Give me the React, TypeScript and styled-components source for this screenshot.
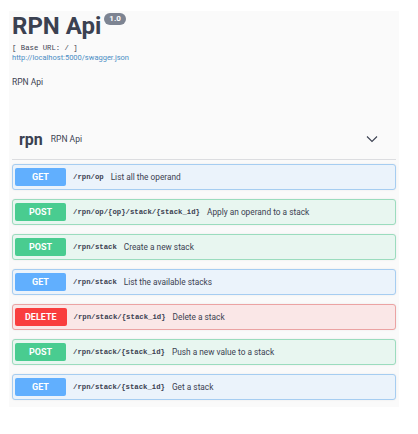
import React from "react";
import styled, { createGlobalStyle } from "styled-components";

const GlobalStyle = createGlobalStyle`
  html, body { margin: 0; padding: 0; background: #ffffff; }
  body { font-family: Roboto, "Liberation Sans", sans-serif; color: #3b4151; }
`;

type Method = "get" | "post" | "delete";

const palette: Record<Method, { main: string; bg: string; border: string }> = {
  get: { main: "#61affe", bg: "#ebf3fb", border: "#a6cdf1" },
  post: { main: "#49cc90", bg: "#e8f6f0", border: "#9bdcbe" },
  delete: { main: "#f93e3e", bg: "#fae7e7", border: "#eba3a3" },
};

const Panel = styled.main`
  margin: 11px 0 0 9px;
  width: 390px;
  box-sizing: border-box;
  padding: 1px 3px 7px 3px;
  background: #fafafa;
  display: flex;
  flex-direction: column;
`;

const TitleRow = styled.div`
  display: flex;
  align-items: flex-start;
  height: 28px;
`;

const Title = styled.h1`
  margin: 0;
  font-family: Roboto, "Liberation Sans", sans-serif;
  font-weight: 700;
  font-size: 24px;
  line-height: 28px;
  color: #3b4151;
`;

const Badge = styled.span`
  margin: 1px 0 0 3px;
  height: 12px;
  padding: 0 5px;
  border-radius: 6px;
  background: #7d8492;
  color: #ffffff;
  font-family: Roboto, "Liberation Sans", sans-serif;
  font-weight: 700;
  font-size: 8px;
  line-height: 12px;
`;

const BaseUrl = styled.div`
  margin-top: 3px;
  font-family: "Liberation Mono", monospace;
  font-size: 7.3px;
  line-height: 10px;
  color: #3b4151;
`;

const SpecLink = styled.a`
  display: block;
  font-family: Roboto, "Liberation Sans", sans-serif;
  font-size: 7.5px;
  line-height: 10px;
  color: #4a8dc4;
  text-decoration: none;
`;

const Description = styled.div`
  margin-top: 14px;
  font-family: Roboto, "Liberation Sans", sans-serif;
  font-size: 8.5px;
  line-height: 11px;
  color: #3b4151;
`;

const TagHeader = styled.div`
  margin-top: 31px;
  height: 41px;
  box-sizing: border-box;
  border-bottom: 1px solid #dcdde0;
  display: flex;
  align-items: center;
  padding: 0 18px 0 7px;
`;

const TagName = styled.span`
  font-family: Roboto, "Liberation Sans", sans-serif;
  font-weight: 700;
  font-size: 16px;
  color: #3b4151;
`;

const TagDesc = styled.span`
  margin-left: 8px;
  font-family: Roboto, "Liberation Sans", sans-serif;
  font-size: 8.5px;
  color: #3b4151;
  flex: 1;
`;

const Chevron = styled.svg`
  width: 12px;
  height: 8px;
  display: block;
`;

const OpList = styled.div`
  margin-top: 4px;
  display: flex;
  flex-direction: column;
  gap: 9px;
`;

const OpRow = styled.div<{ $m: Method }>`
  height: 26px;
  box-sizing: border-box;
  border: 1px solid ${(p) => palette[p.$m].border};
  background: ${(p) => palette[p.$m].bg};
  border-radius: 3px;
  box-shadow: 0 0 2px rgba(0, 0, 0, 0.08);
  display: flex;
  align-items: center;
  padding: 0 2px;
`;

const MethodTag = styled.span<{ $m: Method }>`
  min-width: 51px;
  height: 18px;
  box-sizing: border-box;
  padding: 0 10px;
  border-radius: 2px;
  background: ${(p) => palette[p.$m].main};
  color: #ffffff;
  font-family: Roboto, "Liberation Sans", sans-serif;
  font-weight: 700;
  font-size: 9px;
  display: flex;
  align-items: center;
  justify-content: center;
`;

const Path = styled.span`
  margin-left: 7px;
  font-family: "Liberation Mono", monospace;
  font-weight: 700;
  font-size: 7.3px;
  color: #3b4151;
`;

const OpDesc = styled.span`
  margin-left: 7px;
  font-family: Roboto, "Liberation Sans", sans-serif;
  font-size: 8.3px;
  color: #3b4151;
`;

const ops: { m: Method; path: string; desc: string }[] = [
  { m: "get", path: "/rpn/op", desc: "List all the operand" },
  { m: "post", path: "/rpn/op/{op}/stack/{stack_id}", desc: "Apply an operand to a stack" },
  { m: "post", path: "/rpn/stack", desc: "Create a new stack" },
  { m: "get", path: "/rpn/stack", desc: "List the available stacks" },
  { m: "delete", path: "/rpn/stack/{stack_id}", desc: "Delete a stack" },
  { m: "post", path: "/rpn/stack/{stack_id}", desc: "Push a new value to a stack" },
  { m: "get", path: "/rpn/stack/{stack_id}", desc: "Get a stack" },
];

export default function App() {
  return (
    <>
      <GlobalStyle />
      <Panel>
        <TitleRow>
          <Title>RPN Api</Title>
          <Badge>1.0</Badge>
        </TitleRow>
        <BaseUrl>[ Base URL: / ]</BaseUrl>
        <SpecLink href="#">http://localhost:5000/swagger.json</SpecLink>
        <Description>RPN Api</Description>
        <TagHeader>
          <TagName>rpn</TagName>
          <TagDesc>RPN Api</TagDesc>
          <Chevron viewBox="0 0 12 8">
            <polyline points="1,1.5 6,6.5 11,1.5" fill="none" stroke="#3b4151" strokeWidth="1.1" />
          </Chevron>
        </TagHeader>
        <OpList>
          {ops.map((o, i) => (
            <OpRow key={i} $m={o.m}>
              <MethodTag $m={o.m}>{o.m.toUpperCase()}</MethodTag>
              <Path>{o.path}</Path>
              <OpDesc>{o.desc}</OpDesc>
            </OpRow>
          ))}
        </OpList>
      </Panel>
    </>
  );
}
